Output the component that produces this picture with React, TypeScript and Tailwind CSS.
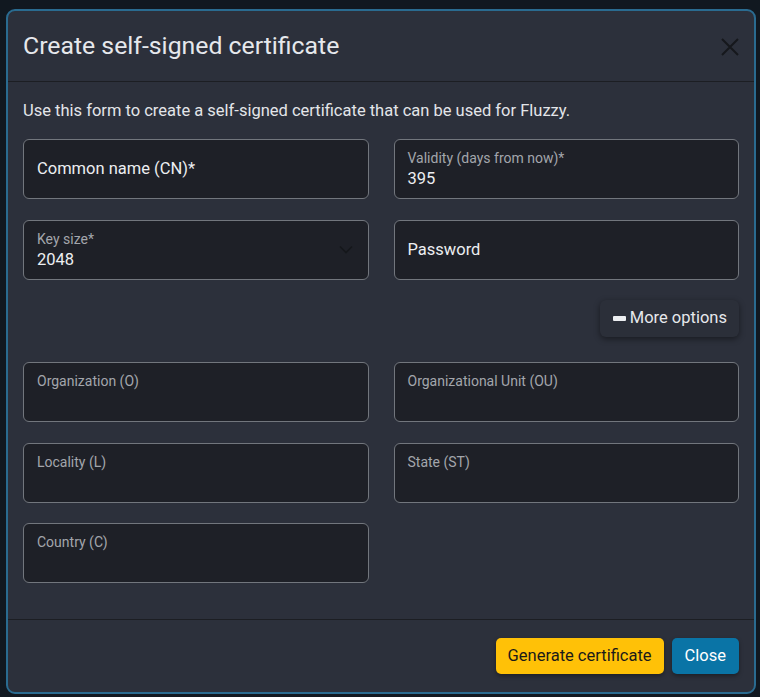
import React from "react";

const font = { fontFamily: "Roboto, 'Liberation Sans', sans-serif" };

function Field({ label, value, select }: { label: string; value?: string; select?: boolean }) {
  const floated = value !== undefined || !["Common name (CN)*", "Password"].includes(label);
  return (
    <div className="relative h-[60px] rounded-[6px] border border-[#72767d] bg-[#1e2027] pl-[13px]">
      {floated ? (
        <div className="flex h-full flex-col pt-[9px]">
          <span className="text-[14px] leading-[18px] text-[#a3a6ac]">{label}</span>
          {value && <span className="mt-[1px] text-[16.5px] leading-[22px] text-[#eceef1]">{value}</span>}
        </div>
      ) : (
        <div className="flex h-full items-center text-[16.5px] text-[#eceef1]">{label}</div>
      )}
      {select && (
        <svg
          className="absolute right-[15px] top-[24px]"
          width="14"
          height="9"
          viewBox="0 0 14 9"
          fill="none"
          stroke="#15171b"
          strokeWidth="1.6"
        >
          <path d="M1 1.5l6 6 6-6" />
        </svg>
      )}
    </div>
  );
}

export default function App() {
  return (
    <div className="h-[697px] w-[760px] overflow-hidden bg-[#111820] pl-[6px] pt-[9px]" style={font}>
      <div className="flex h-[685px] w-[750px] flex-col rounded-[9px] border-2 border-[#2a6b90] bg-[#2c303b]">
        {/* header */}
        <div className="flex h-[71px] items-center justify-between border-b border-[#1c1e23] pl-[15px] pr-[15px]">
          <h1 className="text-[24.8px] font-normal text-[#e6e8ec]">Create self-signed certificate</h1>
          <svg width="18" height="18" viewBox="0 0 18 18" stroke="#16181c" strokeWidth="2" className="mt-[1px]">
            <path d="M1 1l16 16M17 1L1 17" />
          </svg>
        </div>

        {/* body */}
        <div className="flex-1 px-[15px] pt-[17px]">
          <p className="text-[16.5px] leading-[24px] text-[#e3e5e9]">
            Use this form to create a self-signed certificate that can be used for Fluzzy.
          </p>
          <div className="mt-[16px] grid grid-cols-2 gap-x-[25px] gap-y-[21px]">
            <Field label="Common name (CN)*" />
            <Field label="Validity (days from now)*" value="395" />
            <Field label="Key size*" value="2048" select />
            <Field label="Password" />
          </div>
          <div className="mt-[20px] flex justify-end">
            <button className="flex h-[37px] items-center gap-[4px] rounded-[6px] bg-[#2b2f39] pl-[13px] pr-[12px] text-[16.5px] text-[#e6e8ec] shadow-[0_2px_6px_rgba(0,0,0,0.45)]">
              <span className="h-[5px] w-[13px] rounded-[1px] bg-[#eceef1]" />
              More options
            </button>
          </div>
          <div className="mt-[25px] grid grid-cols-2 gap-x-[25px] gap-y-[20.5px]">
            <Field label="Organization (O)" />
            <Field label="Organizational Unit (OU)" />
            <Field label="Locality (L)" />
            <Field label="State (ST)" />
            <Field label="Country (C)" />
          </div>
        </div>

        {/* footer */}
        <div className="flex h-[73px] items-center justify-end gap-[8px] border-t border-[#1c1e23] px-[15px]">
          <button className="h-[36px] rounded-[5px] bg-[#ffc107] px-[12px] text-[16.5px] text-[#1a1a1a] shadow-[0_2px_4px_rgba(0,0,0,0.35)]">
            Generate certificate
          </button>
          <button className="h-[36px] rounded-[5px] bg-[#0a74a6] px-[13px] text-[16.5px] text-white shadow-[0_2px_4px_rgba(0,0,0,0.35)]">
            Close
          </button>
        </div>
      </div>
    </div>
  );
}
